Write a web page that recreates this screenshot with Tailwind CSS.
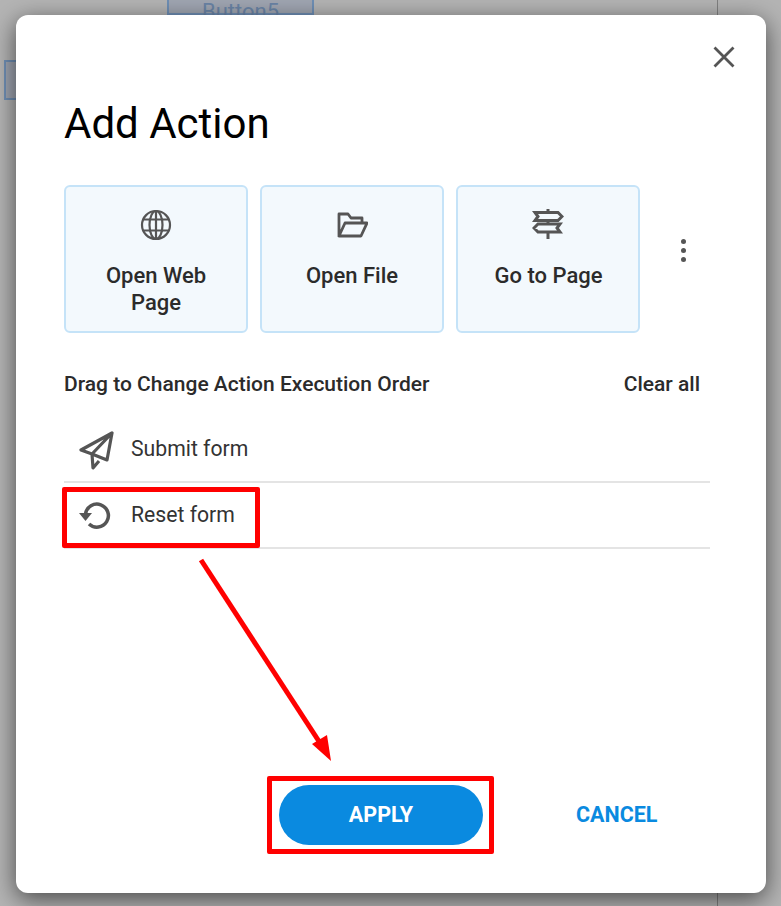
<!DOCTYPE html>
<html lang="en">
<head>
  <meta charset="UTF-8">
  <title>Add Action</title>
  <script src="https://cdn.jsdelivr.net/npm/@tailwindcss/browser@4"></script>
</head>
<body class="bg-[#b4b4b4] font-['Roboto',sans-serif] text-[#2b2b2b]">
  <div class="relative w-[781px] h-[906px] overflow-hidden pt-[15px] pl-[16px]">

    <!-- page behind the dialog -->
    <div class="absolute left-[167px] -top-[8px] w-[147px] h-[23px] border-2 border-[#6f8fb5] bg-[#a0a6b2] text-[#6a84a6] text-[22px] leading-[35px] text-center">Button5</div>
    <div class="absolute left-[4px] top-[60px] w-[20px] h-[40px] border-2 border-[#6f8fb5] bg-[#a0a6b2]"></div>
    <div class="absolute left-[717px] top-0 w-px h-full bg-[#808080]"></div>

    <!-- dialog -->
    <div class="relative w-[750px] h-[878px] bg-white rounded-[12px] shadow-[0_6px_24px_rgba(0,0,0,0.6)] pt-[85px] pl-[48px] pr-[56px]">
      <button class="absolute right-[31px] top-[31px] w-[22px] h-[22px]">
        <svg viewBox="0 0 22 22" class="w-[22px] h-[22px]" fill="none" stroke="#555" stroke-width="2.800"><path d="M1.500 1.500 20.500 20.500M20.500 1.500 1.500 20.500"/></svg>
      </button>

      <h1 class="text-[42px] leading-[47px] text-black">Add Action</h1>

      <div class="flex items-start mt-[38px]">
        <div class="flex gap-[12px]">
          <div class="w-[184px] h-[148px] bg-[#f3f9fd] border-2 border-[#c5e3f8] rounded-[6px] pt-[22px] px-[30px] flex flex-col items-center text-center">
            <svg viewBox="0 0 32 32" class="w-[32px] h-[32px]" fill="none" stroke="#555" stroke-width="2.200"><circle cx="16" cy="16" r="14"/><ellipse cx="16" cy="16" rx="6.500" ry="14"/><path d="M16 2v28M3.500 10.500h25M3.500 21.500h25"/></svg>
            <div class="text-[22px] font-medium leading-[27px] mt-[21px]">Open Web Page</div>
          </div>
          <div class="w-[184px] h-[148px] bg-[#f3f9fd] border-2 border-[#c5e3f8] rounded-[6px] pt-[22px] px-[30px] flex flex-col items-center text-center">
            <svg viewBox="0 0 32 32" class="w-[32px] h-[32px]" fill="none" stroke="#555" stroke-width="2.800" stroke-linejoin="round"><path d="M3 27V5h9l3 4h11v4M3 27h22l6-13H9L3 27Z"/></svg>
            <div class="text-[22px] font-medium leading-[27px] mt-[21px]">Open File</div>
          </div>
          <div class="w-[184px] h-[148px] bg-[#f3f9fd] border-2 border-[#c5e3f8] rounded-[6px] pt-[22px] px-[30px] flex flex-col items-center text-center">
            <svg viewBox="0 0 32 32" class="w-[32px] h-[32px]" fill="none" stroke="#555" stroke-width="3"><path d="M16 0v3M16 12v3M16 23v7M3 3.500H26L30 7.500 26 11.500H3L6 7.500ZM6 15H28L25 19 28 23H6L2 19Z"/></svg>
            <div class="text-[22px] font-medium leading-[27px] mt-[21px] ml-[1px]">Go to Page</div>
          </div>
        </div>
        <div class="ml-[41px] mt-[54px] flex flex-col gap-[4px]">
          <span class="block w-[5px] h-[5px] rounded-full bg-[#555]"></span>
          <span class="block w-[5px] h-[5px] rounded-full bg-[#555]"></span>
          <span class="block w-[5px] h-[5px] rounded-full bg-[#555]"></span>
        </div>
      </div>

      <div class="flex justify-between items-center mt-[39px] pr-[10px] font-medium text-[21px] leading-[24px]">
        <span>Drag to Change Action Execution Order</span>
        <span>Clear all</span>
      </div>

      <div class="mt-[15px] text-[21.2px] text-[#333]">
        <div class="h-[72px] border-b-2 border-[#e4e4e4] flex items-center pl-[14px] pb-[4px]">
          <svg viewBox="0 0 36 40" class="w-[36px] h-[40px] mt-[14px]" fill="none" stroke="#555" stroke-width="3.200" stroke-linejoin="round"><path d="M34 2 3 19 14 23 34 2ZM34 2 29 29 14 23M14 23 15 37 21 30"/></svg>
          <span class="ml-[17px] mt-[9px]">Submit form</span>
        </div>
        <div class="h-[66px] border-b-2 border-[#e4e4e4] flex items-center pl-[16px] pb-[2px]">
          <svg viewBox="0 0 32 32" class="w-[32px] h-[32px] mt-[2px] overflow-visible" fill="none" stroke="#555" stroke-width="3.500"><path d="M5.500 15A11.500 11.500 0 1 1 9 25"/><path d="M-1 14H12L5.500 22Z" fill="#555" stroke="none"/></svg>
          <span class="ml-[19px] mt-px">Reset form</span>
        </div>
      </div>

      <div class="absolute left-[263px] top-[770px] flex items-center">
        <button class="w-[204px] h-[60px] rounded-full bg-[#0a8ae0] text-white font-bold text-[21.5px]">APPLY</button>
        <button class="ml-[93px] text-[#0a8ae0] font-bold text-[21.5px]">CANCEL</button>
      </div>
    </div>

    <!-- red annotations -->
    <div class="absolute left-[62px] top-[487px] w-[198px] h-[61px] border-[5px] border-[#ff0000] rounded-[2px]"></div>
    <div class="absolute left-[267px] top-[776px] w-[227px] h-[78px] border-[5px] border-[#ff0000] rounded-[2px]"></div>
    <svg class="absolute left-0 top-0 pointer-events-none" width="781" height="906" viewBox="0 0 781 906" fill="none">
      <path d="M201 560 322 746" stroke="#ff0000" stroke-width="5"/>
      <path d="M331 761 312 744 327 735Z" fill="#ff0000"/>
    </svg>
  </div>
</body>
</html>
